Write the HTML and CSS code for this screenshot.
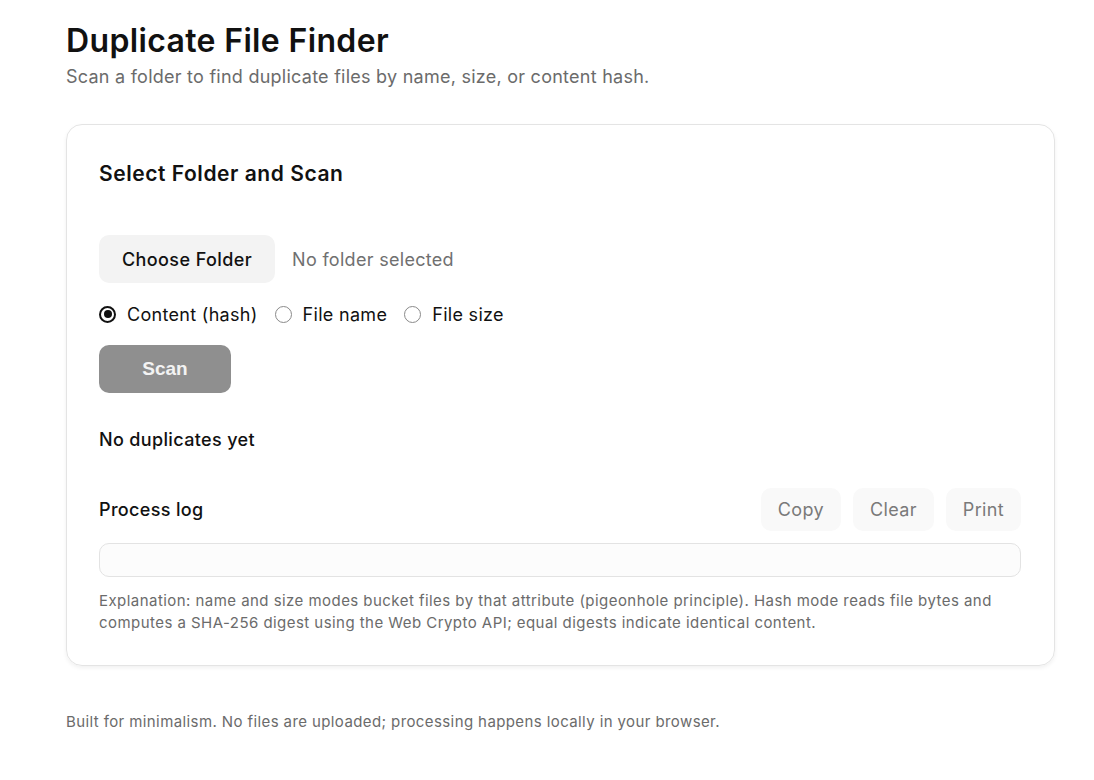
FILE: index.html
```html
<!DOCTYPE html>
<html lang="en">
<head>
<meta charset="utf-8">
<title>Duplicate File Finder</title>
<link rel="stylesheet" href="styles.css">
</head>
<body>
<main class="page">
  <header class="head">
    <h1 class="title">Duplicate File Finder</h1>
    <p class="subtitle">Scan a folder to find duplicate files by name, size, or content hash.</p>
  </header>
  <section class="card">
    <h2 class="card-title">Select Folder and Scan</h2>
    <div class="picker">
      <span class="choose">Choose Folder</span>
      <span class="picked">No folder selected</span>
    </div>
    <div class="modes">
      <label class="mode"><span class="radio checked"></span>Content (hash)</label>
      <label class="mode"><span class="radio"></span>File name</label>
      <label class="mode"><span class="radio"></span>File size</label>
    </div>
    <button class="scan" disabled>Scan</button>
    <div class="results">No duplicates yet</div>
    <div class="log-head">
      <span class="log-title">Process log</span>
      <div class="log-actions">
        <button class="ghost">Copy</button>
        <button class="ghost">Clear</button>
        <button class="ghost">Print</button>
      </div>
    </div>
    <div class="log"></div>
    <p class="explain">Explanation: name and size modes bucket files by that attribute (pigeonhole principle). Hash mode reads file bytes and computes a SHA-256 digest using the Web Crypto API; equal digests indicate identical content.</p>
  </section>
  <footer class="foot">Built for minimalism. No files are uploaded; processing happens locally in your browser.</footer>
</main>
</body>
</html>
```

FILE: styles.css
```css
html, body {
  margin: 0;
  padding: 0;
  background: #ffffff;
}
body {
  font-family: Inter, "Noto Sans", sans-serif;
  color: #111;
}
.page {
  width: 989px;
  padding: 20px 0 0 66px;
}
.head {
  display: flex;
  flex-direction: column;
}
.title {
  margin: 0;
  font-size: 32px;
  font-weight: 600;
  line-height: 42px;
  letter-spacing: 0.35px;
  color: #111;
}
.subtitle {
  margin: 2px 0 0;
  font-size: 18px;
  line-height: 26px;
  letter-spacing: 0.25px;
  color: #6b6b6b;
}
.card {
  margin-top: 34px;
  border: 1px solid #e4e4e4;
  border-radius: 16px;
  box-shadow: 0 2px 4px rgba(0,0,0,0.06);
  padding: 36px 33px 31px 32px;
  display: flex;
  flex-direction: column;
  align-items: flex-start;
}
.card-title {
  margin: 0;
  font-size: 21px;
  font-weight: 600;
  line-height: 26px;
  letter-spacing: 0.55px;
}
.picker {
  margin-top: 48px;
  display: flex;
  align-items: center;
  gap: 17px;
}
.choose {
  height: 48px;
  padding: 0 23px;
  display: flex;
  align-items: center;
  background: #f3f3f3;
  border-radius: 10px;
  font-size: 18px;
  font-weight: 500;
  letter-spacing: 0.4px;
}
.picked {
  font-size: 18px;
  letter-spacing: 0.3px;
  color: #707070;
}
.modes {
  margin-top: 19px;
  display: flex;
  gap: 17px;
  height: 24px;
  align-items: center;
}
.mode {
  display: flex;
  align-items: center;
  gap: 11px;
  font-size: 18px;
  letter-spacing: 0.3px;
}
.radio {
  width: 17px;
  height: 17px;
  border: 1px solid #8a8a8a;
  border-radius: 50%;
  box-sizing: border-box;
  position: relative;
}
.radio.checked {
  border: 2px solid #111;
}
.radio.checked::after {
  content: "";
  position: absolute;
  left: 2.5px;
  top: 2.5px;
  width: 8px;
  height: 8px;
  border-radius: 50%;
  background: #111;
}
.scan {
  margin-top: 19px;
  width: 132px;
  height: 48px;
  border: none;
  border-radius: 10px;
  background: #8f8f8f;
  color: #f3f3f3;
  font-family: "Liberation Sans", Arial, sans-serif;
  font-weight: 700;
  font-size: 19px;
}
.results {
  margin-top: 35px;
  font-size: 18px;
  font-weight: 500;
  line-height: 24px;
  letter-spacing: 0.35px;
}
.log-head {
  margin-top: 36px;
  align-self: stretch;
  display: flex;
  justify-content: space-between;
  align-items: center;
}
.log-title {
  font-size: 18px;
  font-weight: 500;
  letter-spacing: 0.35px;
}
.log-actions {
  display: flex;
  gap: 12px;
}
.ghost {
  height: 43px;
  padding: 0 17px;
  border: none;
  border-radius: 10px;
  background: #f9f9f9;
  color: #7a7a7a;
  font-family: inherit;
  font-size: 18px;
  letter-spacing: 0.35px;
}
.log {
  margin-top: 12px;
  align-self: stretch;
  height: 34px;
  box-sizing: border-box;
  border: 1px solid #e3e3e3;
  border-radius: 10px;
  background: #fcfcfc;
}
.explain {
  margin: 13px 0 0;
  font-size: 15px;
  line-height: 22px;
  letter-spacing: 0.45px;
  color: #6b6b6b;
}
.foot {
  margin-top: 45px;
  font-size: 15px;
  line-height: 22px;
  letter-spacing: 0.4px;
  color: #6b6b6b;
}
```
